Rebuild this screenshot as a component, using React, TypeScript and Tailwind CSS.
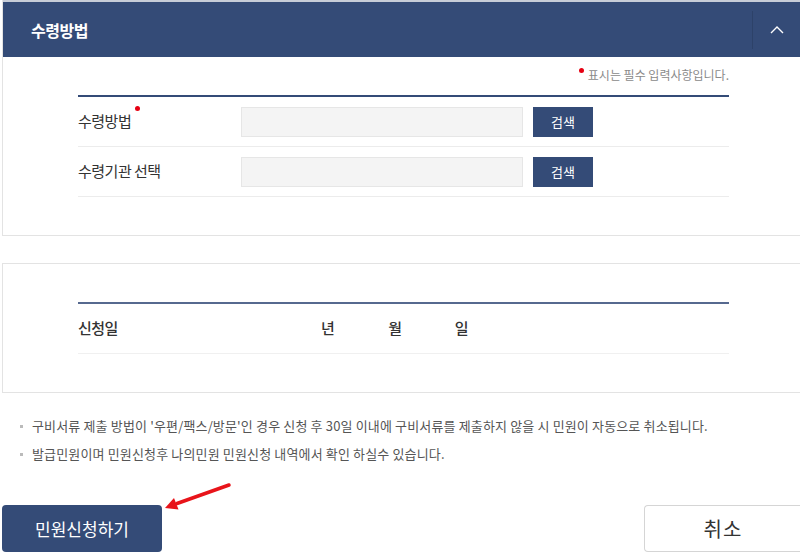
import React from "react";

const NAVY = "bg-[#344b77]";

function RequiredDot({ className = "" }: { className?: string }) {
    return <span className={"inline-block h-[5px] w-[5px] rounded-full bg-[#e60012] " + className} />;
}

function SearchRow({ label, required }: { label: string; required?: boolean }) {
    return (
        <div className="flex h-[50px] items-center border-b border-[#ececec]">
            <div className="relative w-[163px] text-[15px] tracking-[-0.5px] text-[#333]">
                {label}
                {required && <RequiredDot className="absolute left-[57px] top-[-4px]" />}
            </div>
            <div className="h-[30px] w-[282px] border border-[#e6e6e6] bg-[#f4f4f4]" />
            <button
                type="button"
                className={"ml-[10px] h-[30px] w-[60px] text-[13px] text-white " + NAVY}
            >
                검색
            </button>
        </div>
    );
}

export default function App() {
    return (
        <div
            className="relative h-[553px] w-[800px] overflow-hidden bg-white"
            style={{ fontFamily: '"Noto Sans CJK KR", "Noto Sans", sans-serif' }}
        >
            {/* 수령방법 panel */}
            <div className="ml-[2px] border-b border-l border-[#e3e3e3]">
                <div className={"flex h-[57px] items-center border-t-2 border-[#c7cdd8] " + NAVY}>
                    <h2 className="flex-1 pl-[28px] text-[16px] font-bold tracking-[-0.5px] text-white">
                        수령방법
                    </h2>
                    <div className="flex h-[38px] w-[48px] items-center justify-center border-l border-[#2d4269]">
                        <svg width="14" height="8" viewBox="0 0 14 8" fill="none">
                            <polyline points="1,7 7,1 13,7" stroke="white" strokeWidth="1.4" />
                        </svg>
                    </div>
                </div>

                <div className="ml-[75px] w-[651px] pb-[38px]">
                    <div className="box-content flex h-[18px] items-center justify-end gap-[4px] pt-[9px] text-[12px] leading-[18px] text-[#8a8a8a]">
                        <RequiredDot className="relative top-[-5px]" />
                        <span>표시는 필수 입력사항입니다.</span>
                    </div>
                    <div className={"mt-[11px] h-[2px] " + NAVY} />
                    <SearchRow label="수령방법" required />
                    <SearchRow label="수령기관 선택" />
                </div>
            </div>

            {/* 신청일 panel */}
            <div className="ml-[2px] mt-[27px] border-y border-l border-[#e3e3e3]">
                <div className="ml-[75px] w-[651px] pb-[38px] pt-[38px]">
                    <div className="h-[2px] bg-[#56698f]" />
                    <div className="flex h-[50px] items-center border-b border-[#f0f0f0] text-[15px] font-medium tracking-[-0.5px] text-[#333]">
                        <div className="w-[163px]">신청일</div>
                        <span className="w-[80px]" />
                        <span>년</span>
                        <span className="w-[54px]" />
                        <span>월</span>
                        <span className="w-[53px]" />
                        <span>일</span>
                    </div>
                </div>
            </div>

            {/* notes */}
            <ul className="pl-[20px] pt-[19px] text-[13px] leading-[28px] tracking-[0.15px] text-[#555]">
                <li className="flex items-center">
                    <span className="mr-[9px] h-[3px] w-[3px] bg-[#bbb]" />
                    구비서류 제출 방법이 '우편/팩스/방문'인 경우 신청 후 30일 이내에 구비서류를 제출하지 않을 시 민원이 자동으로 취소됩니다.
                </li>
                <li className="flex items-center">
                    <span className="mr-[9px] h-[3px] w-[3px] bg-[#bbb]" />
                    발급민원이며 민원신청후 나의민원 민원신청 내역에서 확인 하실수 있습니다.
                </li>
            </ul>

            {/* buttons */}
            <div className="mt-[37px] flex pl-[2px]">
                <button
                    type="button"
                    className={"h-[47px] w-[160px] rounded-[4px] text-[17px] text-white " + NAVY}
                >
                    민원신청하기
                </button>
                <button
                    type="button"
                    className="ml-auto h-[47px] w-[156px] rounded-l-[4px] border border-r-0 border-[#d5d5d5] bg-white pl-[1px] text-[20px] tracking-[1px] text-[#333]"
                >
                    취소
                </button>
            </div>

            {/* annotation arrow */}
            <svg className="pointer-events-none absolute left-0 top-0" width="800" height="553">
                <line x1="229" y1="485" x2="177" y2="503.5" stroke="#e8141a" strokeWidth="3.5" strokeLinecap="round" />
                <polygon points="165,508 178.5,509.5 174,498" fill="#e8141a" />
            </svg>
        </div>
    );
}
